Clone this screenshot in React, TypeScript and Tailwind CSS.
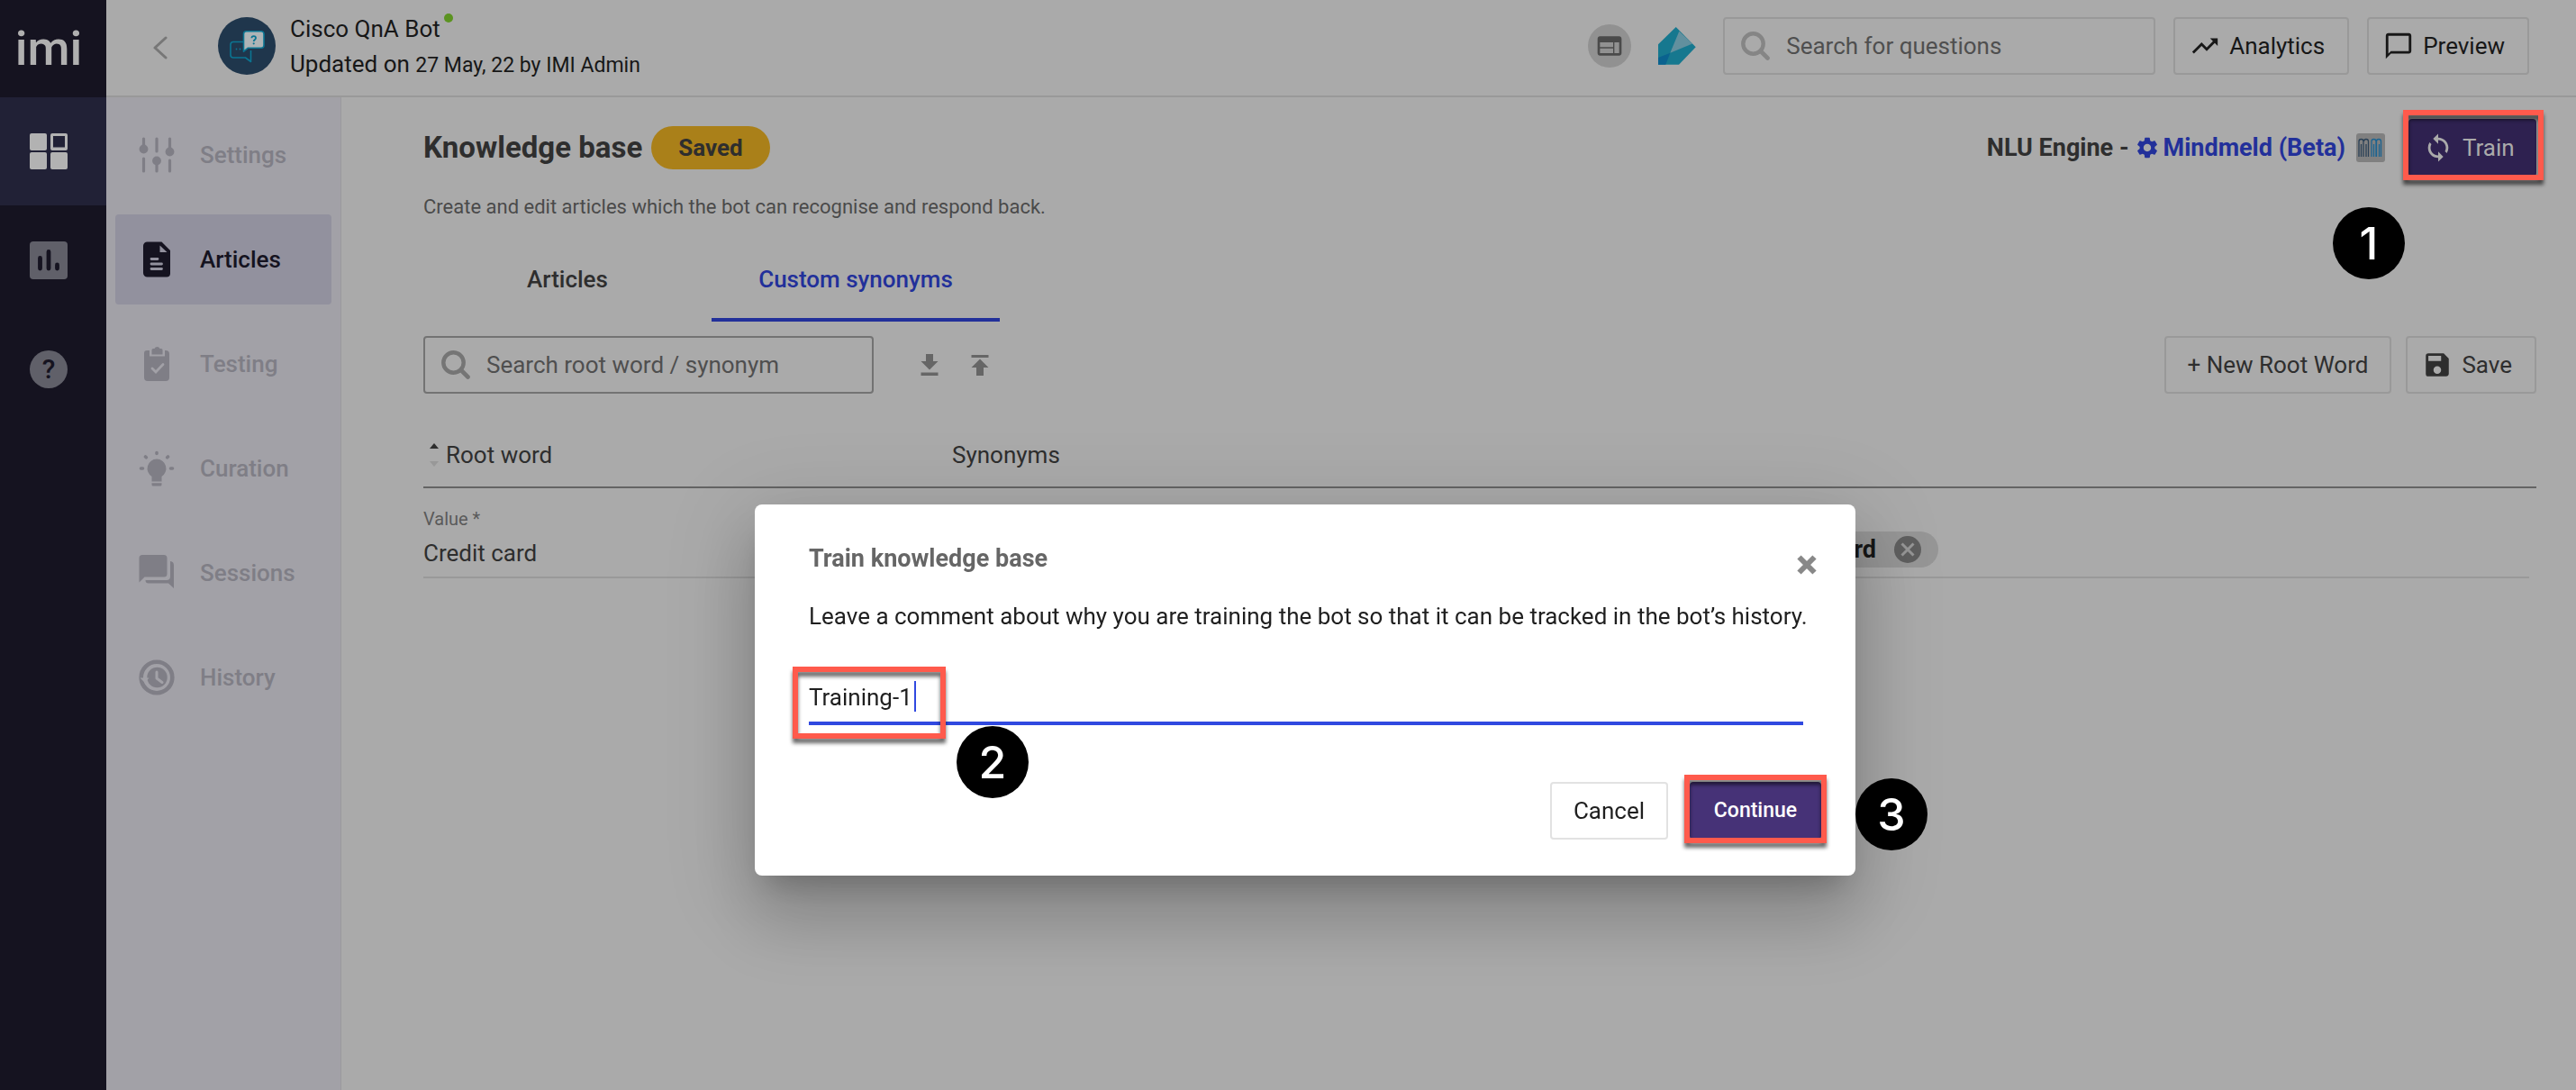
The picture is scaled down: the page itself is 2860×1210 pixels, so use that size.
import React, { useState } from "react";
import { MdChatBubbleOutline, MdSave, MdSettings, MdSync, MdTrendingUp, MdWeb } from "react-icons/md";

function SearchGlyph() {
  return (
    <svg viewBox="0 0 32 32" className="size-8 shrink-0" fill="none" stroke="currentColor" aria-hidden="true">
      <circle cx="13.5" cy="13.5" r="11.2" strokeWidth="4.4" />
      <path d="M22.5 22.5 29.500 29.500" strokeWidth="4.6" strokeLinecap="round" />
    </svg>
  );
}

function SlidersGlyph() {
  return (
    <svg viewBox="0 0 40 40" className="size-10" fill="currentColor" stroke="currentColor" strokeWidth="3.2" strokeLinecap="round" aria-hidden="true">
      <path d="M5.500 2v9M5.500 24v14M20 2v14M20 28v10M34.500 2v11M34.500 26v12" />
      <circle cx="5.500" cy="13.500" r="4.900" stroke="none" />
      <circle cx="20" cy="26.500" r="4.900" stroke="none" />
      <circle cx="34.500" cy="16.500" r="4.900" stroke="none" />
    </svg>
  );
}

function DocumentGlyph() {
  return (
    <svg viewBox="0 0 40 40" className="size-10" aria-hidden="true">
      <path fill="currentColor" d="M9.500.5h16L35 10v25.500a4 4 0 0 1-4 4H9.500a4.500 4.500 0 0 1-4.500-4.500V5A4.500 4.500 0 0 1 9.500.5z" />
      <path fill="#92919e" d="M23.500 4.500V12h8z" />
      <path stroke="#92919e" strokeWidth="2.800" strokeLinecap="round" d="M14 19.500h7M14 25h11.500M14 30.500h11.500" />
    </svg>
  );
}

function ClipboardGlyph() {
  return (
    <svg viewBox="0 0 40 40" className="size-10" aria-hidden="true">
      <path fill="currentColor" d="M9 5h3v6.500h17V5h1a4 4 0 0 1 4 4v26a4 4 0 0 1-4 4H10a4 4 0 0 1-4-4V8a3 3 0 0 1 3-3z" />
      <path fill="currentColor" d="M16 3h1.500a3.200 3.200 0 0 1 6 0H25a1.500 1.500 0 0 1 1.500 1.500v5h-12v-5A1.500 1.500 0 0 1 16 3z" />
      <path fill="none" stroke="#a2a1a7" strokeWidth="2.800" strokeLinecap="round" d="m15 25 4 4 8-8.500" />
    </svg>
  );
}

function BulbGlyph() {
  return (
    <svg viewBox="0 0 40 40" className="size-10" fill="currentColor" aria-hidden="true">
      <path d="M20 9.500a10.500 10.500 0 0 0-5.500 19.400V34.500h11v-5.600A10.500 10.500 0 0 0 20 9.500z" />
      <path d="M14.500 36.300h11v1.700a1.500 1.500 0 0 1-1.500 1.500h-8a1.500 1.500 0 0 1-1.500-1.500z" />
      <path stroke="currentColor" strokeWidth="3.600" strokeLinecap="round" d="M20 2.500v1M7.500 7l.8.8M32.500 7l-.8.8M2.500 20h2M35.500 20h2" />
    </svg>
  );
}

function ForumGlyph() {
  return (
    <svg viewBox="0 0 40 40" className="size-10" fill="currentColor" aria-hidden="true">
      <path d="M4 0h24a3.500 3.500 0 0 1 3.500 3.500V21a3.500 3.500 0 0 1-3.500 3.500H6.500L.5 30.500v-27A3.500 3.500 0 0 1 4 0z" />
      <path d="M35 7a4.500 4.500 0 0 1 4 4.500V37l-6-5.500H11A3.500 3.500 0 0 1 7.500 28H31a4 4 0 0 0 4-4z" />
    </svg>
  );
}

function HistoryGlyph() {
  return (
    <svg viewBox="0 0 40 40" className="size-10" aria-hidden="true">
      <circle cx="20" cy="20" r="17.300" fill="none" stroke="currentColor" strokeWidth="4.600" />
      <circle cx="20.500" cy="20" r="11.200" fill="currentColor" />
      <path fill="#a2a1a7" d="M1.500 20.500h10L7 26z" />
      <path fill="none" stroke="#a2a1a7" strokeWidth="3" strokeLinecap="round" strokeLinejoin="round" d="M20 14v7l6 4.500" />
    </svg>
  );
}

function ChevronLeft() {
  return (
    <svg viewBox="0 0 16 26" className="h-[26px] w-4" fill="none" stroke="#777777" strokeWidth="3" strokeLinecap="round" strokeLinejoin="round" aria-hidden="true">
      <path d="M14 2 2 13l12 11" />
    </svg>
  );
}

function BotAvatar() {
  return (
    <svg viewBox="0 0 64 64" className="size-16" aria-hidden="true">
      <circle cx="32" cy="32" r="32" fill="#1f364c" />
      <path fill="none" stroke="#0b7592" strokeWidth="1.600" strokeLinejoin="round" d="M28 27.500H17a3 3 0 0 0-3 3V42a3 3 0 0 0 3 3h13.500l6 4.500V37" />
      <path fill="#aeb4b6" stroke="#0b7592" strokeWidth="1.600" strokeLinejoin="round" d="M31.500 15.800H48a3 3 0 0 1 3 3v12.400a3 3 0 0 1-3 3H33.500l-5 4V18.800a3 3 0 0 1 3-3z" />
      <circle cx="20.500" cy="35.500" r=".9" fill="#0b7592" />
      <circle cx="24.500" cy="35.500" r=".9" fill="#0b7592" />
      <path fill="none" stroke="#0b7592" strokeWidth="1.800" d="M37.400 23.300c0-3 4.600-3 4.600 0 0 1.700-2.300 1.700-2.300 3.700" />
      <circle cx="39.700" cy="29.300" r="1.100" fill="#0b7592" />
    </svg>
  );
}

function GemLogo() {
  return (
    <svg viewBox="0 0 42 42" className="size-[42px]" aria-hidden="true">
      <path fill="#16788f" d="M19.700 0 41.700 22.300 23 41.700H0V19.300z" />
      <path fill="#62909e" d="m23.300 4.700 14.700 13.700-24.700 10.300z" />
      <path fill="#0a628f" d="m0 34 13.300-5.300L8.300 41.700H0z" />
    </svg>
  );
}

function MindmeldMark() {
  return (
    <svg viewBox="0 0 32 32" className="size-8" fill="none" strokeWidth="1.300" aria-hidden="true">
      <rect width="32" height="32" rx="3" fill="#808080" />
      <path stroke="#2b4156" d="M3 26V9a2.500 2.500 0 0 1 5 0V26M5.500 26V12M8.500 9a2.500 2.500 0 0 1 5 0v17M11 26V12" />
      <path stroke="#1c6491" d="M17 26V9a2.500 2.500 0 0 1 5 0V26M19.500 26V12M22.500 26V9a2.500 2.500 0 0 1 5 0v17M25.500 26V12" />
    </svg>
  );
}

const navItems = [
  { label: "Settings", icon: SlidersGlyph, active: false },
  { label: "Articles", icon: DocumentGlyph, active: true },
  { label: "Testing", icon: ClipboardGlyph, active: false },
  { label: "Curation", icon: BulbGlyph, active: false },
  { label: "Sessions", icon: ForumGlyph, active: false },
  { label: "History", icon: HistoryGlyph, active: false },
];

function OutlineButton({ children }: { children: React.ReactNode }) {
  return (
    <button type="button" className="flex h-16 shrink-0 items-center gap-2.5 rounded border-2 border-[#999999] pr-[25px] pl-4 whitespace-nowrap">
      {children}
    </button>
  );
}

function Highlight({ className }: { className: string }) {
  return <span className={`pointer-events-none absolute border-6 border-[#ff5a4c] drop-shadow-[0_5px_2px_rgba(0,0,0,0.6)] ${className}`} />;
}

function StepBadge({ step, className }: { step: number; className: string }) {
  return (
    <span className={`absolute flex size-20 items-center justify-center rounded-full bg-black font-[Inter,sans-serif] text-[50px] leading-none font-medium text-white ${className}`}>
      {step}
    </span>
  );
}

function Rail() {
  return (
    <nav aria-label="Product" className="flex w-[118px] shrink-0 flex-col gap-px bg-[#151320]">
      <div>
        <div className="flex h-[108px] items-center justify-center pr-2.5 text-[54px] leading-none font-medium text-[#b0b0b0]">imi</div>
        <a href="#apps" aria-label="Apps" className="flex h-[120px] items-center justify-center bg-[#212136] pr-2.5">
          <svg viewBox="0 0 42 42" className="size-[42px]" fill="#b2b2b2">
            <rect x="0" y="1" width="19" height="19" rx="2" />
            <path fillRule="evenodd" d="M25 1h15a2 2 0 0 1 2 2v15a2 2 0 0 1-2 2H25a2 2 0 0 1-2-2V3a2 2 0 0 1 2-2zm1 3v12.500h13V4z" />
            <rect x="0" y="22" width="19" height="19" rx="2" />
            <rect x="23" y="22" width="19" height="19" rx="2" />
          </svg>
        </a>
      </div>
      <a href="#reports" aria-label="Reports" className="flex h-[120px] items-center justify-center pr-2.5">
        <svg viewBox="0 0 42 42" className="size-[42px]">
          <rect width="42" height="42" rx="4" fill="#606069" />
          <path stroke="#151320" strokeWidth="4.800" strokeLinecap="round" d="M11.500 18.500V30M21 11.500V30M30.500 26v4" />
        </svg>
      </a>
      <a href="#help" aria-label="Help" className="flex h-[120px] items-center justify-center pr-2.5">
        <span className="flex size-[42px] items-center justify-center rounded-full bg-[#606069] text-[30px] leading-none font-medium text-[#151320]">?</span>
      </a>
    </nav>
  );
}

function Header() {
  return (
    <header className="flex h-[108px] shrink-0 items-center border-b-2 border-[#999999] pr-[52px] pb-1 pl-[52px] text-[#171717]">
      <button type="button" aria-label="Back" className="mr-14 pt-1">
        <ChevronLeft />
      </button>
      <BotAvatar />
      <div className="ml-4 pt-0.5 leading-[39px]">
        <div className="flex">
          Cisco QnA Bot
          <span className="mt-0.5 ml-1 size-2.5 rounded-full bg-[#5b9320]" />
        </div>
        <div>
          Updated on <span className="text-[23px]">27 May, 22 by IMI Admin</span>
        </div>
      </div>
      <div className="ml-auto flex items-center gap-5">
        <button type="button" aria-label="Layout" className="mr-2.5 flex size-12 items-center justify-center rounded-full bg-[#919191] text-[#4a4a4a]">
          <MdWeb className="size-8" />
        </button>
        <div className="mr-2.5">
          <GemLogo />
        </div>
        <label className="flex h-16 w-[480px] items-center gap-[18px] rounded border-2 border-[#999999] pl-[18px] text-[#858585]">
          <SearchGlyph />
          <input type="text" aria-label="Search for questions" placeholder="Search for questions" className="min-w-0 flex-1 bg-transparent text-[#4a4a4a] outline-none placeholder:text-[#4f4f4f]" />
        </label>
        <OutlineButton>
          <MdTrendingUp className="size-[34px]" />
          Analytics
        </OutlineButton>
        <OutlineButton>
          <MdChatBubbleOutline className="size-[34px]" />
          Preview
        </OutlineButton>
      </div>
    </header>
  );
}

function Sidebar() {
  return (
    <nav aria-label="Bot" className="flex w-[261px] shrink-0 flex-col gap-4 border-r border-[#9a9a9d] bg-[#a2a1a7] px-2.5 pt-3.5">
      {navItems.map(({ label, icon: Icon, active }) => (
        <a
          key={label}
          href={`#${label.toLowerCase()}`}
          aria-current={active ? "page" : undefined}
          className={`flex h-[100px] items-center gap-7 rounded pl-[26px] font-medium ${active ? "bg-[#92919e] text-[#151320]" : "text-[#7f7e86]"}`}
        >
          <Icon />
          {label}
        </a>
      ))}
    </nav>
  );
}

function SynonymTable() {
  return (
    <table className="mt-8 w-full table-fixed border-separate border-spacing-0 text-[#2e2e2e]">
      <colgroup>
        <col className="w-[587px]" />
        <col />
        <col className="w-2" />
      </colgroup>
      <thead>
        <tr className="h-[73px] text-left">
          <th className="border-b-2 border-[#646464] p-0 font-normal">
            <button type="button" className="flex items-center gap-2 pl-[7px]">
              <svg viewBox="0 0 10 26" className="h-[26px] w-2.5" aria-hidden="true">
                <path fill="#2e2e2e" d="m5 0 5 6H0z" />
                <path fill="#989898" d="m5 26 5-6H0z" />
              </svg>
              Root word
            </button>
          </th>
          <th className="border-b-2 border-[#646464] p-0 font-normal">Synonyms</th>
          <th className="border-b-2 border-[#646464] p-0" />
        </tr>
      </thead>
      <tbody>
        <tr className="h-[100px] align-top">
          <td className="border-b-2 border-[#999999] p-0 pt-5">
            <label htmlFor="root-value" className="block text-xl leading-7 text-[#5a5a5a]">
              Value *
            </label>
            <input id="root-value" type="text" defaultValue="Credit card" className="mt-2 block h-8 w-80 bg-transparent outline-none" />
          </td>
          <td className="border-b-2 border-[#999999] p-0 pt-12">
            <div className="flex w-[1095px] justify-end">
              <span className="flex h-10 items-center gap-5 rounded-full bg-[#969696] pr-[19px] pl-6 text-[27px] font-bold text-[#171717]">
                card
                <button type="button" aria-label="Remove synonym">
                  <svg viewBox="0 0 30 30" className="size-[30px]">
                    <circle cx="15" cy="15" r="15" fill="#5f5f5f" />
                    <path stroke="#969696" strokeWidth="3" d="m8.500 8.500 13 13m0-13-13 13" />
                  </svg>
                </button>
              </span>
            </div>
          </td>
          <td className="p-0" />
        </tr>
      </tbody>
    </table>
  );
}

function TrainDialog() {
  const [comment, setComment] = useState("Training-1");
  return (
    <div className="fixed inset-0 flex items-start justify-center pt-[560px] pl-[38px]">
      <div
        role="dialog"
        aria-modal="true"
        aria-labelledby="train-title"
        className="relative w-[1222px] rounded-lg bg-white pt-11 pr-[38px] pb-10 pl-[60px] text-[#1f1f1f] shadow-[0_22px_30px_-14px_rgba(0,0,0,0.2),0_48px_76px_6px_rgba(0,0,0,0.14),0_18px_92px_16px_rgba(0,0,0,0.12)]"
      >
        <div className="flex items-start justify-between">
          <h2 id="train-title" className="text-[27px] leading-8 font-bold text-[#666666]">
            Train knowledge base
          </h2>
          <button type="button" aria-label="Close" className="mt-3 mr-[5px]">
            <svg viewBox="0 0 22 22" className="size-[22px]" stroke="#888888" strokeWidth="6">
              <path d="m2.500 2.500 17 17m0-17-17 17" />
            </svg>
          </button>
        </div>
        <p className="mt-[30px] leading-8 whitespace-nowrap">Leave a comment about why you are training the bot so that it can be tracked in the bot’s history.</p>
        <div className="relative mt-14 mr-5">
          <input
            type="text"
            aria-label="Training comment"
            value={comment}
            onChange={(event) => setComment(event.target.value)}
            className="block h-[49px] w-full border-b-4 border-[#3049e0] pb-2.5 outline-none"
          />
          <span className="absolute top-0 left-[117px] h-[34px] w-0.5 bg-[#3049e0]" />
          <Highlight className="-top-4 -left-[18px] h-20 w-[170px]" />
        </div>
        <div className="mt-[63px] flex items-center justify-end gap-6">
          <button type="button" className="h-16 w-[131px] rounded border-2 border-[#e2e2e2]">
            Cancel
          </button>
          <div className="relative">
            <button type="button" className="block h-16 w-[146px] rounded bg-[#463277] text-[23px] font-medium text-white">
              Continue
            </button>
            <Highlight className="-inset-x-1.5 -top-2 -bottom-1" />
          </div>
        </div>
        <StepBadge step={2} className="top-[246px] left-[224px]" />
        <StepBadge step={3} className="top-[304px] left-full" />
      </div>
    </div>
  );
}

export default function App() {
  return (
    <div className="flex min-h-screen bg-[#aaaaaa] font-[Roboto,sans-serif] text-[26px] leading-8">
      <Rail />
      <div className="flex min-w-0 flex-1 flex-col">
        <Header />
        <div className="flex flex-1">
          <Sidebar />
          <main className="min-w-0 flex-1 pt-6 pr-11 pl-[91px] text-[#2e2e2e]">
            <div className="flex h-16 items-center">
              <h1 className="text-[33px] leading-10 font-bold">Knowledge base</h1>
              <span className="ml-2.5 flex h-12 items-center rounded-full bg-[#aa8019] px-[30px] font-bold">Saved</span>
              <div className="ml-auto flex items-center text-[27px] font-bold">
                NLU Engine -
                <a href="#engine" className="ml-1.5 flex items-center gap-1 text-[#22309a]">
                  <MdSettings className="size-7" />
                  Mindmeld (Beta)
                </a>
                <span className="mr-[26px] ml-3">
                  <MindmeldMark />
                </span>
              </div>
              <div className="relative">
                <button type="button" className="flex h-16 w-[142px] items-center gap-2.5 rounded bg-[#2e2150] pl-4 text-[#aaaaaa]">
                  <MdSync className="size-[34px]" />
                  Train
                </button>
                <Highlight className="-top-2.5 -right-2 -bottom-1 -left-1.5" />
                <StepBadge step={1} className="top-[98px] right-[146px]" />
              </div>
            </div>
            <p className="mt-[18px] text-[22px] leading-8 text-[#4a4a4a]">Create and edit articles which the bot can recognise and respond back.</p>
            <div role="tablist" className="mt-5 flex font-medium">
              <button type="button" role="tab" aria-selected="false" className="h-[91px] w-80 border-b-4 border-transparent">
                Articles
              </button>
              <button type="button" role="tab" aria-selected="true" className="h-[91px] w-80 border-b-4 border-[#22309a] text-[#22309a]">
                Custom synonyms
              </button>
            </div>
            <div className="mt-4 flex items-center">
              <label className="flex h-16 w-[500px] items-center gap-[18px] rounded border-2 border-[#737373] pl-[18px] text-[#757575]">
                <SearchGlyph />
                <input type="text" aria-label="Search root word / synonym" placeholder="Search root word / synonym" className="min-w-0 flex-1 bg-transparent outline-none placeholder:text-[#4f4f4f]" />
              </label>
              <button type="button" aria-label="Download" className="ml-[51px] text-[#666666]">
                <svg viewBox="0 0 22 24" className="h-6 w-[22px]" fill="currentColor">
                  <path d="M7 0h8v8h5.500L11 17.500 1.500 8H7zM1.500 20.500h19V24h-19z" />
                </svg>
              </button>
              <button type="button" aria-label="Upload" className="ml-[34px] text-[#666666]">
                <svg viewBox="0 0 22 24" className="h-6 w-[22px]" fill="currentColor">
                  <path d="M1.500 1h19v3h-19zM11 5.500l9.500 9.500H15v9H7v-9H1.500z" />
                </svg>
              </button>
              <div className="ml-auto flex gap-4">
                <button type="button" className="h-16 rounded border-2 border-[#999999] px-6">
                  + New Root Word
                </button>
                <OutlineButton>
                  <MdSave className="size-[34px]" />
                  Save
                </OutlineButton>
              </div>
            </div>
            <SynonymTable />
          </main>
        </div>
      </div>
      <TrainDialog />
    </div>
  );
}
